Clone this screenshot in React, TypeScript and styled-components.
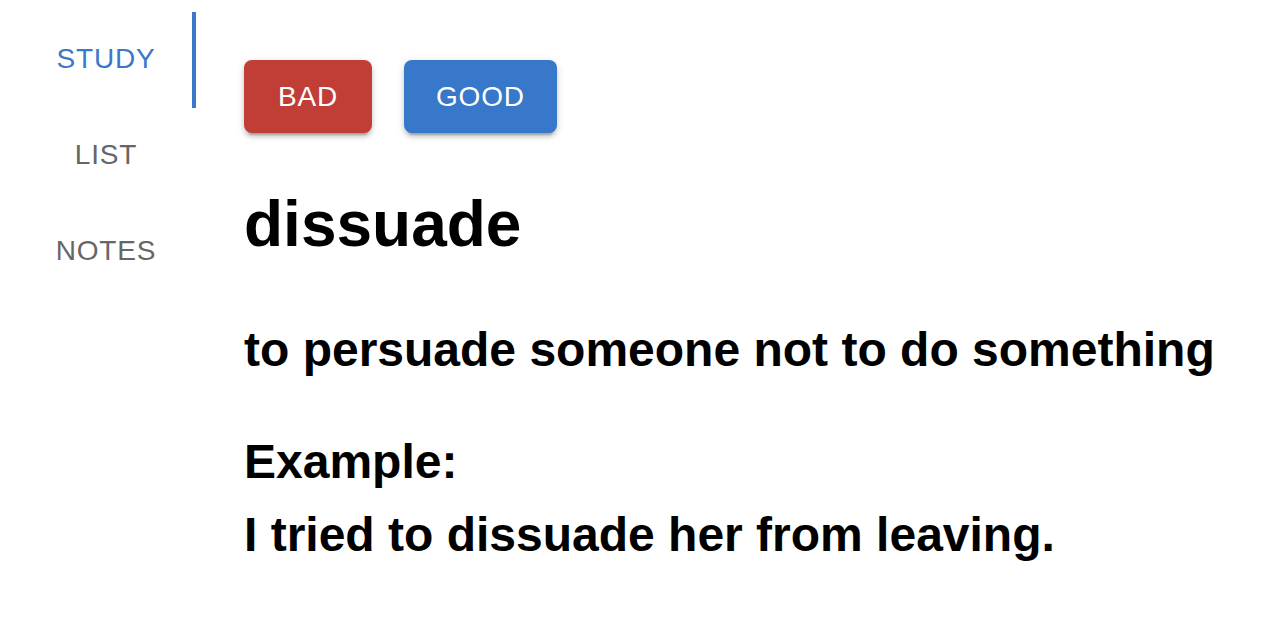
import React from "react";
import styled, { createGlobalStyle } from "styled-components";

const GlobalStyle = createGlobalStyle`
  html, body { margin: 0; padding: 0; background: #fff; }
  body { font-family: "Liberation Sans", Arial, Helvetica, sans-serif; color: #000; }
`;

const Page = styled.div`
  display: flex;
  align-items: flex-start;
  padding: 12px 0 0 16px;
`;

const TabList = styled.nav`
  display: flex;
  flex-direction: column;
  width: 180px;
  flex-shrink: 0;
`;

const Tab = styled.button<{ $active?: boolean }>`
  position: relative;
  height: 96px;
  width: 180px;
  border: 0;
  background: transparent;
  display: flex;
  align-items: center;
  justify-content: center;
  font-family: "Liberation Sans", Arial, sans-serif;
  font-size: 28px;
  font-weight: 400;
  letter-spacing: 0.8px;
  text-transform: uppercase;
  color: ${(p) => (p.$active ? "#3a78c9" : "#666666")};
  padding: 0 0 2px;
  cursor: pointer;
  &::after {
    content: "";
    display: ${(p) => (p.$active ? "block" : "none")};
    position: absolute;
    right: 0;
    top: 0;
    width: 4px;
    height: 96px;
    background: #3a78c9;
  }
`;

const Content = styled.main`
  display: flex;
  flex-direction: column;
  padding: 48px;
`;

const ButtonRow = styled.div`
  display: flex;
  gap: 32px;
`;

const ActionButton = styled.button<{ $color: string }>`
  min-width: 128px;
  height: 73px;
  padding: 12px 32px;
  border: 0;
  border-radius: 8px;
  background: ${(p) => p.$color};
  color: #fff;
  font-family: "Liberation Sans", Arial, sans-serif;
  font-size: 28px;
  font-weight: 400;
  letter-spacing: 0.8px;
  text-transform: uppercase;
  box-shadow: 0px 6px 2px -4px rgba(0,0,0,0.2), 0px 4px 4px 0px rgba(0,0,0,0.14), 0px 2px 10px 0px rgba(0,0,0,0.12);
  cursor: pointer;
`;

const Word = styled.h1`
  margin: 54px 0 0;
  font-size: 64px;
  font-weight: 700;
  line-height: 74px;
`;

const Definition = styled.h2`
  margin: 61px 0 0;
  font-size: 48px;
  font-weight: 700;
  line-height: 56px;
`;

const Example = styled.h2`
  margin: 47px 0 0;
  font-size: 48px;
  font-weight: 700;
  line-height: 73px;
`;

export default function App() {
  return (
    <>
      <GlobalStyle />
      <Page>
        <TabList>
          <Tab $active>Study</Tab>
          <Tab>List</Tab>
          <Tab>Notes</Tab>
        </TabList>
        <Content>
          <ButtonRow>
            <ActionButton $color="#c13e37">Bad</ActionButton>
            <ActionButton $color="#3778cb">Good</ActionButton>
          </ButtonRow>
          <Word>dissuade</Word>
          <Definition>to persuade someone not to do something</Definition>
          <Example>
            Example:
            <br />
            I tried to dissuade her from leaving.
          </Example>
        </Content>
      </Page>
    </>
  );
}
